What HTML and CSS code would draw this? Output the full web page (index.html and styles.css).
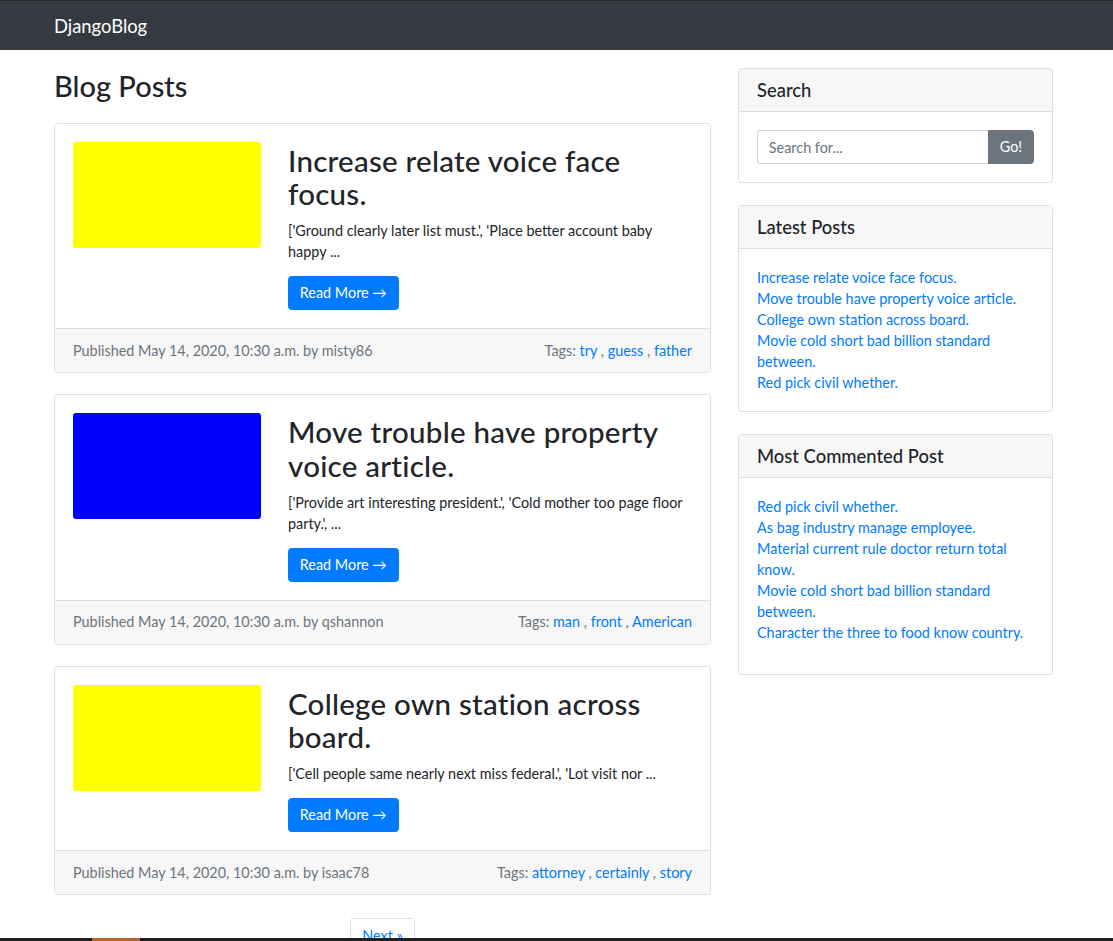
FILE: index.html
```html
<!DOCTYPE html>
<html lang="en">
<head>
<meta charset="utf-8">
<title>DjangoBlog</title>
<link rel="stylesheet" href="styles.css">
</head>
<body>
<nav class="navbar">
  <div class="wrap">
    <a class="brand" href="#">DjangoBlog</a>
  </div>
</nav>

<div class="wrap layout">
  <main class="main">
    <h1 class="page-title">Blog Posts</h1>

    <article class="card post">
      <div class="post-body">
        <div class="thumb thumb-yellow"></div>
        <div class="post-text">
          <h2 class="post-title">Increase relate voice face focus.</h2>
          <p class="excerpt">['Ground clearly later list must.', 'Place better account baby happy ...</p>
          <a class="btn btn-primary" href="#">Read More &rarr;</a>
        </div>
      </div>
      <div class="card-footer post-footer">
        <span>Published May 14, 2020, 10:30 a.m. by misty86</span>
        <span>Tags: <a href="#">try</a> , <a href="#">guess</a> , <a href="#">father</a></span>
      </div>
    </article>

    <article class="card post">
      <div class="post-body">
        <div class="thumb thumb-blue"></div>
        <div class="post-text">
          <h2 class="post-title">Move trouble have property voice article.</h2>
          <p class="excerpt">['Provide art interesting president.', 'Cold mother too page floor party.', ...</p>
          <a class="btn btn-primary" href="#">Read More &rarr;</a>
        </div>
      </div>
      <div class="card-footer post-footer">
        <span>Published May 14, 2020, 10:30 a.m. by qshannon</span>
        <span>Tags: <a href="#">man</a> , <a href="#">front</a> , <a href="#">American</a></span>
      </div>
    </article>

    <article class="card post">
      <div class="post-body">
        <div class="thumb thumb-yellow"></div>
        <div class="post-text">
          <h2 class="post-title">College own station across board.</h2>
          <p class="excerpt">['Cell people same nearly next miss federal.', 'Lot visit nor ...</p>
          <a class="btn btn-primary" href="#">Read More &rarr;</a>
        </div>
      </div>
      <div class="card-footer post-footer">
        <span>Published May 14, 2020, 10:30 a.m. by isaac78</span>
        <span>Tags: <a href="#">attorney</a> , <a href="#">certainly</a> , <a href="#">story</a></span>
      </div>
    </article>

    <nav class="pager">
      <a class="page-link" href="#">Next &raquo;</a>
    </nav>
  </main>

  <aside class="sidebar">
    <section class="card side-card">
      <h5 class="card-header">Search</h5>
      <div class="card-body">
        <form class="input-group">
          <input class="form-control" type="text" placeholder="Search for...">
          <button class="btn btn-secondary" type="button">Go!</button>
        </form>
      </div>
    </section>

    <section class="card side-card">
      <h5 class="card-header">Latest Posts</h5>
      <div class="card-body">
        <ul class="link-list">
          <li><a href="#">Increase relate voice face focus.</a></li>
          <li><a href="#">Move trouble have property voice article.</a></li>
          <li><a href="#">College own station across board.</a></li>
          <li><a href="#">Movie cold short bad billion standard between.</a></li>
          <li><a href="#">Red pick civil whether.</a></li>
        </ul>
      </div>
    </section>

    <section class="card side-card">
      <h5 class="card-header">Most Commented Post</h5>
      <div class="card-body body-tall">
        <ul class="link-list">
          <li><a href="#">Red pick civil whether.</a></li>
          <li><a href="#">As bag industry manage employee.</a></li>
          <li><a href="#">Material current rule doctor return total know.</a></li>
          <li><a href="#">Movie cold short bad billion standard between.</a></li>
          <li><a href="#">Character the three to food know country.</a></li>
        </ul>
      </div>
    </section>
  </aside>
</div>

<div class="taskbar"><span class="task-active"></span></div>
</body>
</html>
```

FILE: styles.css
```css
* { box-sizing: border-box; }

html, body {
  margin: 0;
  padding: 0;
}

body {
  font-family: Lato, "Noto Sans", "Liberation Sans", sans-serif;
  font-size: 14.4px;
  line-height: 21px;
  color: #212529;
  background: #fff;
}

a { color: #007bff; text-decoration: none; }

.wrap {
  width: 1035px;
  margin: 0 auto;
  padding: 0 15px;
}

/* navbar */
.navbar {
  background: #343a40;
  border-top: 1px solid #222529;
  height: 50px;
  display: flex;
  align-items: center;
}
.brand {
  color: #fff;
  font-size: 18.4px;
  line-height: 27px;
  display: inline-block;
  padding-top: 1px;
}

/* layout */
.layout {
  display: grid;
  grid-template-columns: 657px 315px;
  column-gap: 27px;
  padding-top: 18px;
  align-items: start;
}

.page-title {
  font-size: 29px;
  font-weight: 500;
  line-height: 1.2;
  margin: 1px 0 19px;
}

/* cards */
.card {
  border: 1px solid #dfdfdf;
  border-radius: 3.6px;
  background: #fff;
  margin-bottom: 21px;
  overflow: hidden;
}
.side-card { margin-bottom: 22px; }

.card-header {
  margin: 0;
  background: #f7f7f7;
  border-bottom: 1px solid #dfdfdf;
  font-size: 18.4px;
  font-weight: 500;
  line-height: 21px;
  padding: 10.5px 18px;
}

.card-body {
  padding: 18px;
}
.body-tall { padding-bottom: 31px; }

.card-footer {
  background: #f7f7f7;
  border-top: 1px solid #dfdfdf;
  padding: 10.8px 18px;
  line-height: 21.6px;
}

/* posts */
.post-body {
  display: grid;
  grid-template-columns: 188px 1fr;
  column-gap: 27px;
  padding: 18px;
  align-items: start;
}

.thumb {
  height: 106px;
  border-radius: 3px;
}
.thumb-yellow { background: #ffff00; }
.thumb-blue { background: #0000ff; }

.post-title {
  font-size: 29.5px;
  letter-spacing: 0.25px;
  font-weight: 500;
  line-height: 33.4px;
  margin: 2px 0 9.5px;
}

.excerpt {
  margin: 0 0 14px;
}

.btn {
  display: inline-block;
  font-family: inherit;
  font-size: 14.4px;
  line-height: 21.6px;
  padding: 5.2px 10.8px;
  border: 1px solid transparent;
  border-radius: 3.6px;
  cursor: pointer;
}
.btn-primary {
  background: #007bff;
  border-color: #007bff;
  color: #fff;
}
.btn-secondary {
  background: #6c757d;
  border-color: #6c757d;
  color: #fff;
}

.post-footer {
  display: flex;
  justify-content: space-between;
  color: #6c757d;
}

/* pager */
.pager {
  display: flex;
  justify-content: center;
  padding-top: 2px;
}
.page-link {
  display: block;
  border: 1px solid #dee2e6;
  border-radius: 3.6px;
  padding: 6px 11px;
  line-height: 21.6px;
}

/* sidebar */
.input-group {
  display: flex;
  margin: 0;
}
.form-control {
  flex: 1;
  min-width: 0;
  height: 34px;
  font-family: inherit;
  font-size: 14.4px;
  color: #495057;
  padding: 5.4px 10.8px;
  border: 1px solid #ced4da;
  border-right: none;
  border-radius: 3.6px 0 0 3.6px;
  outline: none;
}
.form-control::placeholder { color: #6c757d; }
.input-group .btn {
  height: 34px;
  width: 46px;
  padding: 0;
  border-radius: 0 3.6px 3.6px 0;
}

.link-list {
  list-style: none;
  margin: 0;
  padding: 0;
  line-height: 21px;
}

/* taskbar edge at bottom of screen */
.taskbar {
  position: fixed;
  left: 0;
  right: 0;
  bottom: 0;
  height: 3px;
  background: #1f1f1f;
}
.task-active {
  position: absolute;
  left: 92px;
  top: 0;
  width: 48px;
  height: 3px;
  background: #b0672b;
}
```
